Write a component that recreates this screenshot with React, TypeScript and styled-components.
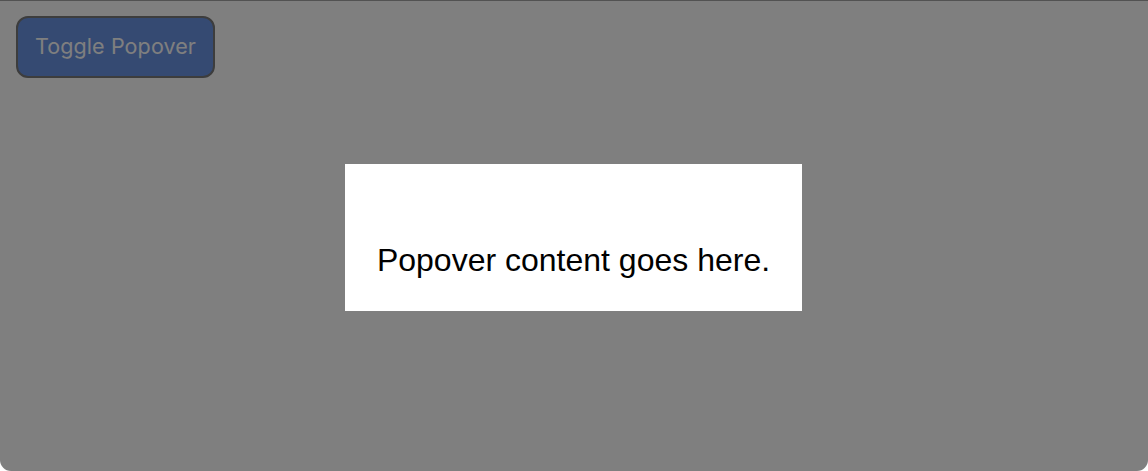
import React, { useState } from "react";
import styled, { createGlobalStyle } from "styled-components";

const GlobalStyle = createGlobalStyle`
  html, body {
    margin: 0;
    padding: 0;
    background: #ffffff;
    font-family: "Liberation Sans", Arial, Helvetica, sans-serif;
  }
`;

const Frame = styled.div`
  position: relative;
  width: 1148px;
  height: 471px;
  box-sizing: border-box;
  background: #ffffff;
  border-radius: 0 0 11px 11px;
  overflow: hidden;
  padding: 16px;
`;

const ToggleButton = styled.button`
  width: 199px;
  height: 62px;
  box-sizing: border-box;
  padding: 0 0 2px;
  border: 2px solid #7a7a7a;
  border-radius: 12px;
  background: #6a94e4;
  color: #ffffff;
  font-family: "Inter", "Liberation Sans", Arial, sans-serif;
  font-size: 21.5px;
  letter-spacing: 0.1px;
  cursor: pointer;
`;

const Overlay = styled.div`
  position: absolute;
  inset: 0;
  background: rgba(0, 0, 0, 0.5);
  border-top: 1px solid rgba(0, 0, 0, 0.35);
  display: flex;
  align-items: center;
  justify-content: center;
`;

const Popover = styled.div`
  width: 457px;
  height: 147px;
  box-sizing: border-box;
  margin: 3px 1px 0 0;
  background: #ffffff;
  display: flex;
  flex-direction: column;
  align-items: center;
  justify-content: flex-end;
  padding-bottom: 33px;
`;

const PopoverText = styled.p`
  margin: 0;
  color: #000000;
  font-size: 32px;
  line-height: 36px;
`;

export default function App() {
  const [open, setOpen] = useState(true);

  return (
    <>
      <GlobalStyle />
      <Frame>
        <ToggleButton onClick={() => setOpen(!open)}>Toggle Popover</ToggleButton>
        {open && (
          <Overlay onClick={() => setOpen(false)}>
            <Popover onClick={(e) => e.stopPropagation()}>
              <PopoverText>Popover content goes here.</PopoverText>
            </Popover>
          </Overlay>
        )}
      </Frame>
    </>
  );
}
